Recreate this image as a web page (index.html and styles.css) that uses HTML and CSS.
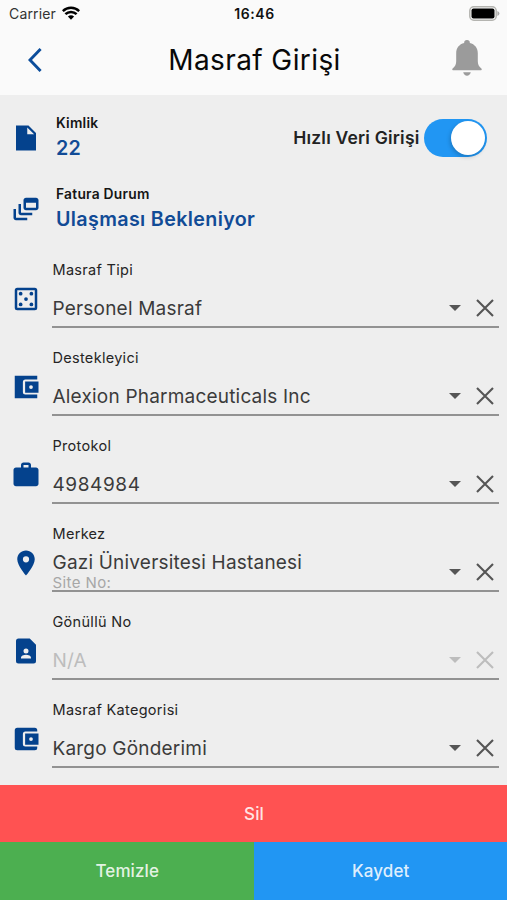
FILE: index.html
```html
<!DOCTYPE html>
<html lang="tr">
<head>
<meta charset="utf-8">
<title>Masraf Girişi</title>
<link rel="stylesheet" href="styles.css">
</head>
<body>
<svg width="0" height="0" class="defs">
  <symbol id="down" viewBox="0 0 12 6"><path d="M0 0h12L6 6z"/></symbol>
  <symbol id="close" viewBox="0 0 18 18"><path d="M1 1l16 16M17 1L1 17" fill="none" stroke="currentColor" stroke-width="2.1"/></symbol>
</svg>
<div class="app">
  <header>
    <div class="status">
      <div class="carrier"><span>Carrier</span>
        <svg width="18" height="14" viewBox="0 0 18 14"><g fill="none" stroke="#000" stroke-width="2.5"><path d="M.8 5.1a11.700 11.700 0 0 1 16.400 0"/><path d="M3.400 8.200a8 8 0 0 1 11.200 0"/></g><path d="M5.900 10.600a4.500 4.500 0 0 1 6.200 0L9 13.800z"/></svg>
      </div>
      <time>16:46</time>
      <svg class="battery" width="31" height="15" viewBox="0 0 31 15"><rect x=".8" y=".8" width="26.400" height="13.400" rx="4" fill="#fafafa" stroke="#b4b4b0" stroke-width="1.500"/><rect x="2.500" y="2.500" width="23" height="10" rx="2"/><path d="M28.400 5v5q2-.7 2-2.500T28.400 5z" fill="#aaa"/></svg>
    </div>
    <div class="nav">
      <svg class="back" width="14" height="24" viewBox="0 0 14 24"><path d="M12.600 1L2 12l10.600 11" fill="none" stroke="currentColor" stroke-width="2.900"/></svg>
      <h1>Masraf Girişi</h1>
      <svg class="bell" width="30" height="37" viewBox="0 0 30 37"><path d="M15 0a2.800 2.800 0 0 1 2.800 3.100c5 1.200 8 5 8 10.200v7.700c0 3.300 1 5.500 3.300 7.300.9.700.9 1.900-.1 1.900H1c-1 0-1-1.200-.1-1.900 2.300-1.800 3.300-4 3.300-7.300v-7.700c0-5.200 3-9 8-10.200A2.800 2.800 0 0 1 15 0zM11.200 32.300h7.600c-.6 2.300-2 3.400-3.800 3.400s-3.200-1.100-3.800-3.400z"/></svg>
    </div>
  </header>

  <main>
    <section class="info">
      <svg class="icon" viewBox="0 0 24 24"><path d="M4 2v20h16V8l-6-6zm9 7V3.500L18.500 9z"/></svg>
      <div class="info-text"><h2>Kimlik</h2><strong>22</strong></div>
      <div class="quick"><span>Hızlı Veri Girişi</span><i class="switch"></i></div>
    </section>
    <section class="info">
      <svg class="icon" viewBox="0 0 24 24"><path d="M8 8H6v7c0 1.100.9 2 2 2h9v-2H8z"/><path d="M20 3h-8c-1.100 0-2 .9-2 2v6c0 1.100.9 2 2 2h8c1.100 0 2-.9 2-2V5c0-1.100-.9-2-2-2zm0 8h-8V7h8z"/><path d="M4 12H2v7c0 1.100.9 2 2 2h9v-2H4z"/></svg>
      <div class="info-text"><h2>Fatura Durum</h2><strong>Ulaşması Bekleniyor</strong></div>
    </section>

    <section class="field">
      <svg class="icon" viewBox="0 0 24 24"><path fill-rule="evenodd" d="M5 3h14a2 2 0 0 1 2 2v14a2 2 0 0 1-2 2H5a2 2 0 0 1-2-2V5a2 2 0 0 1 2-2zm0 2v14h14V5z"/><circle cx="7.700" cy="7.700" r="1.500"/><circle cx="16.300" cy="7.700" r="1.500"/><circle cx="12" cy="12" r="1.500"/><circle cx="7.700" cy="16.300" r="1.500"/><circle cx="16.300" cy="16.300" r="1.500"/></svg>
      <div class="control"><label>Masraf Tipi</label><div class="select"><span class="value">Personel Masraf</span><svg class="down"><use href="#down"/></svg><svg class="close"><use href="#close"/></svg></div></div>
    </section>
    <section class="field">
      <svg class="icon" viewBox="0 0 24 24"><path d="M3 3h18v3H11.500a2 2 0 0 0-2 2v8a2 2 0 0 0 2 2H21v3H3z"/><path fill-rule="evenodd" d="M11.300 7.500H22v9H11.300zM16 10.500a1.500 1.500 0 1 0 0 3 1.500 1.500 0 0 0 0-3z"/></svg>
      <div class="control"><label>Destekleyici</label><div class="select"><span class="value">Alexion Pharmaceuticals Inc</span><svg class="down"><use href="#down"/></svg><svg class="close"><use href="#close"/></svg></div></div>
    </section>
    <section class="field">
      <svg class="icon" viewBox="0 0 24 24"><path fill-rule="evenodd" d="M20 6h-4V4c0-1.110-.89-2-2-2h-4c-1.110 0-2 .89-2 2v2H4c-1.110 0-2 .89-2 2v11c0 1.110.89 2 2 2h16c1.110 0 2-.89 2-2V8c0-1.110-.89-2-2-2zm-6 0h-4V4h4z"/></svg>
      <div class="control"><label>Protokol</label><div class="select"><span class="value number">4984984</span><svg class="down"><use href="#down"/></svg><svg class="close"><use href="#close"/></svg></div></div>
    </section>
    <section class="field">
      <svg class="icon" viewBox="0 0 24 24"><path d="M12 2C8.130 2 5 5.130 5 9c0 5.250 7 13 7 13s7-7.750 7-13c0-3.870-3.130-7-7-7zm0 9.500a2.500 2.500 0 0 1 0-5 2.500 2.500 0 0 1 0 5z"/></svg>
      <div class="control"><label>Merkez</label><div class="select"><span class="value double">Gazi Üniversitesi Hastanesi<small>Site No:</small></span><svg class="down"><use href="#down"/></svg><svg class="close"><use href="#close"/></svg></div></div>
    </section>
    <section class="field disabled">
      <svg class="icon" viewBox="0 0 24 24"><path fill-rule="evenodd" d="M15 2H6a2 2 0 0 0-2 2v16a2 2 0 0 0 2 2h12a2 2 0 0 0 2-2V7zm-3 8a2 2 0 1 1 0 4 2 2 0 0 1 0-4zm4 8H8v-.570c0-.810.480-1.530 1.220-1.850a6.950 6.950 0 0 1 5.560 0A2.010 2.010 0 0 1 16 17.430z"/></svg>
      <div class="control"><label>Gönüllü No</label><div class="select"><span class="value">N/A</span><svg class="down"><use href="#down"/></svg><svg class="close"><use href="#close"/></svg></div></div>
    </section>
    <section class="field">
      <svg class="icon" viewBox="0 0 24 24"><path d="M5 3h14a2 2 0 0 1 2 2v1h-9.500a2 2 0 0 0-2 2v8a2 2 0 0 0 2 2H21v1a2 2 0 0 1-2 2H5a2 2 0 0 1-2-2V5a2 2 0 0 1 2-2z"/><path fill-rule="evenodd" d="M11.300 7.500H22v9H11.300zM16 10.500a1.500 1.500 0 1 0 0 3 1.500 1.500 0 0 0 0-3z"/></svg>
      <div class="control"><label>Masraf Kategorisi</label><div class="select"><span class="value">Kargo Gönderimi</span><svg class="down"><use href="#down"/></svg><svg class="close"><use href="#close"/></svg></div></div>
    </section>
  </main>

  <footer>
    <button class="delete">Sil</button>
    <button class="clear">Temizle</button>
    <button class="save">Kaydet</button>
  </footer>
</div>
</body>
</html>
```
FILE: styles.css
```css
* { box-sizing: border-box; }
body { margin: 0; background: #eee; font-family: Inter, "Liberation Sans", sans-serif; color: #222; }
svg { display: block; flex: none; }
.defs { position: absolute; }
.app { width: 507px; height: 900px; display: flex; flex-direction: column; overflow: hidden; }
header { height: 95px; background: #fafafa; }
.status { height: 27px; display: grid; grid-template-columns: 1fr auto 1fr; align-items: center; padding: 0 7px 0 9px; }
.carrier { display: flex; align-items: center; gap: 6px; font-size: 14px; letter-spacing: .15px; color: #333; }
.carrier svg { margin-top: -2px; }
time { font-size: 14px; font-weight: 600; letter-spacing: .6px; color: #111; }
.battery { justify-self: end; }
.nav { height: 66px; display: grid; grid-template-columns: 60px 1fr 60px; align-items: center; }
.back { margin-left: 28px; color: #0b4d9b; }
.nav h1 { margin: 0; padding-left: 2px; text-align: center; font-size: 28px; line-height: 34px; font-weight: 400; letter-spacing: .4px; color: #080808; }
.bell { margin: -3px 0 0 5px; fill: #9b9b9b; }
main { flex: 1; padding-top: 7px; }
.icon { width: 30px; height: 30px; fill: #04428d; }
.info { height: 71px; display: flex; align-items: center; padding: 0 20.500px 0 11px; }
.info-text { margin-left: 15px; flex: 1; }
.info h2 { margin: 0; font-size: 13.800px; line-height: 17px; font-weight: 600; letter-spacing: .25px; color: #151515; }
.info strong { display: block; margin: 4px 0 1px; font-size: 19.700px; line-height: 24px; font-weight: 600; letter-spacing: .35px; color: #114b96; }
.quick { display: flex; align-items: center; gap: 4px; font-size: 17.500px; font-weight: 600; letter-spacing: .2px; }
.switch { width: 63px; height: 38px; border-radius: 19px; background: #2196f3; display: flex; align-items: center; justify-content: flex-end; padding-right: 2px; }
.switch::after { content: ""; width: 34px; height: 34px; border-radius: 50%; background: #fff; box-shadow: -1px 2px 4px #0003; }
.field { height: 88px; display: flex; padding: 0 8px 0 11px; }
.field .icon { margin-top: 40px; }
.control { width: 447px; margin-left: 11px; padding-top: 16px; }
.control label { display: block; height: 20px; padding-left: .5px; font-size: 14.500px; line-height: 20px; letter-spacing: .3px; color: #252525; }
.select { height: 48px; display: flex; align-items: center; padding: 10px 5px 0 .5px; border-bottom: 2px solid #929292; color: #555; }
.value { flex: 1; padding-top: 2px; font-size: 19px; line-height: 24px; letter-spacing: .2px; color: #3b3b3b; }
.number { letter-spacing: .6px; }
.double { margin-top: -17px; padding-top: 7px; height: 40px; }
.double small { display: block; font-size: 15px; line-height: 17px; margin-top: -1px; color: #a7a7a7; letter-spacing: .4px; }
.down { width: 12px; height: 6px; margin-right: 15px; fill: currentColor; }
.close { width: 18px; height: 18px; }
.disabled .value, .disabled .select { color: #bdbdbd; }
footer { height: 115px; display: grid; grid-template-columns: 1fr 1fr; grid-template-rows: 57.400px 57.600px; }
button { border: 0; padding: 0 0 0 1px; font: 500 17px Inter, sans-serif; letter-spacing: .1px; color: #fffd; }
.delete { grid-column: 1 / -1; background: #ff5252; }
.clear { background: #4caf50; }
.save { background: #2196f3; }
```
